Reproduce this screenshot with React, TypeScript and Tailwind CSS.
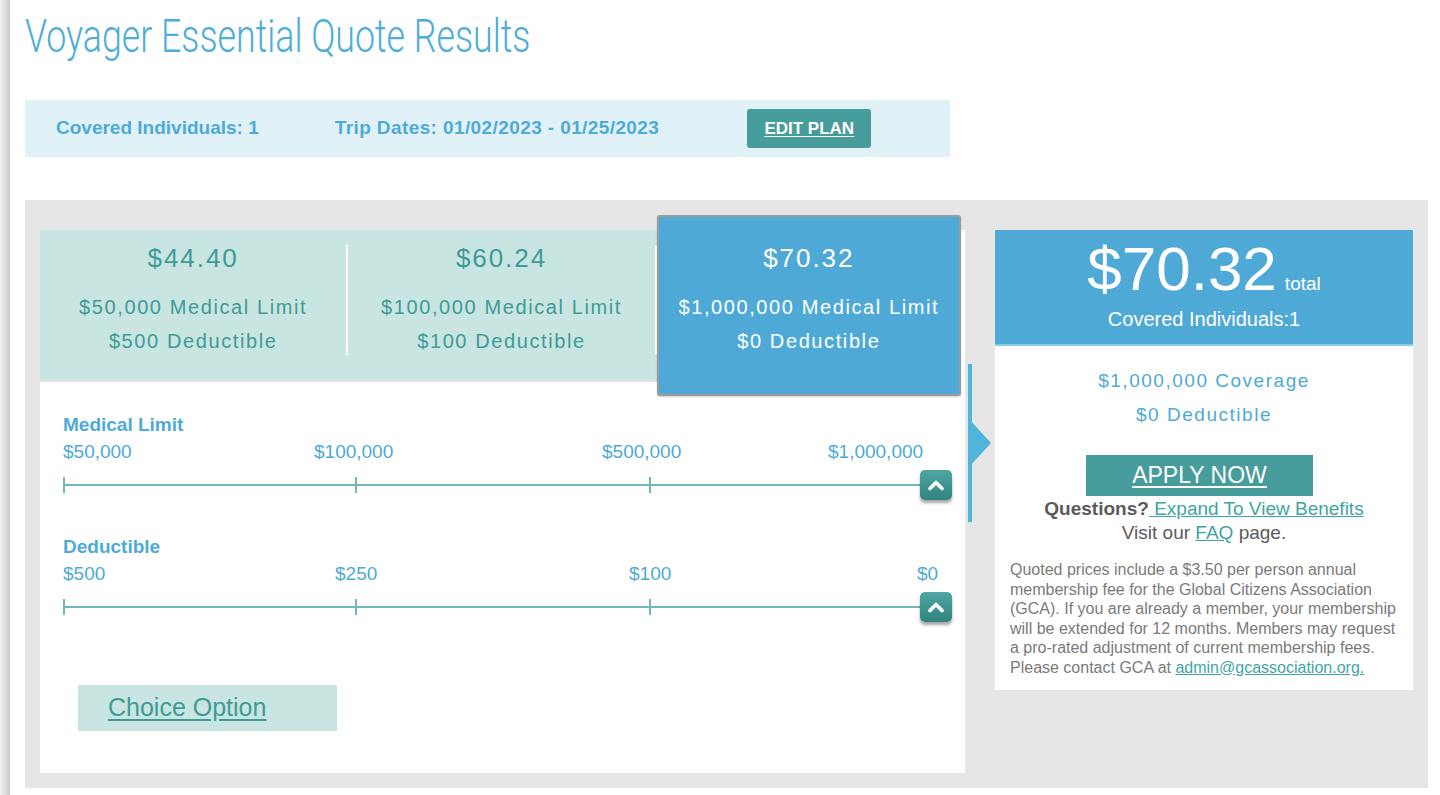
import React from "react";

const sans = "font-['Liberation_Sans',Arial,sans-serif]";

type Tick = { text: string; pos: string };

const medicalTicks: Tick[] = [
  { text: "$50,000", pos: "left-0" },
  { text: "$100,000", pos: "left-[251px]" },
  { text: "$500,000", pos: "left-[539px]" },
  { text: "$1,000,000", pos: "left-[765px]" },
];

const deductibleTicks: Tick[] = [
  { text: "$500", pos: "left-0" },
  { text: "$250", pos: "left-[272px]" },
  { text: "$100", pos: "left-[566px]" },
  { text: "$0", pos: "left-[854px]" },
];

function Handle() {
  return (
    <div className="absolute right-0 top-0 grid h-[30px] w-[32px] place-items-center rounded-[5px] bg-gradient-to-b from-[#4fa6a3] to-[#2f8480] shadow-[0_3px_3px_rgba(0,0,0,0.35)]">
      <svg width="18" height="12" viewBox="0 0 18 12" aria-hidden>
        <path d="M3 9.5 L9 3.5 L15 9.5" fill="none" stroke="#fff" strokeWidth="3.6" strokeLinecap="round" strokeLinejoin="round" />
      </svg>
    </div>
  );
}

function RangeRow({ title, ticks }: { title: string; ticks: Tick[] }) {
  return (
    <div className="pr-[13px]">
      <div className="text-[19px] font-bold leading-[24px] text-[#4eaad7]">{title}</div>
      <div className="relative mt-[3px] h-[24px] text-[19px] leading-[24px] text-[#4eaad7]">
        {ticks.map((t) => (
          <span key={t.text} className={`absolute top-0 whitespace-nowrap ${t.pos}`}>
            {t.text}
          </span>
        ))}
      </div>
      <div className="relative mt-[6px] h-[30px]">
        <div className="absolute left-0 right-[16px] top-[14px] h-[2px] bg-[#73b6b9]" />
        <div className="absolute left-0 top-[7px] h-[16px] w-[2px] bg-[#73b6b9]" />
        <div className="absolute left-[292px] top-[7px] h-[16px] w-[2px] bg-[#73b6b9]" />
        <div className="absolute left-[586px] top-[7px] h-[16px] w-[2px] bg-[#73b6b9]" />
        <Handle />
      </div>
    </div>
  );
}

function PlanTab({ price, limit, deductible }: { price: string; limit: string; deductible: string }) {
  return (
    <div className="flex w-[307px] flex-col items-center pt-[12px] text-[#3e9b97]">
      <div className="text-[26px] leading-[32px] tracking-[0.075em]">{price}</div>
      <div className="mt-[16px] text-[20px] leading-[34px] tracking-[0.08em]">{limit}</div>
      <div className="text-[20px] leading-[34px] tracking-[0.08em]">{deductible}</div>
    </div>
  );
}

export default function App() {
  return (
    <div className={`flex min-h-[795px] bg-white ${sans}`}>
      <div className="w-[10px] shrink-0 bg-gradient-to-r from-[#efefef] via-[#dedede] to-[#c9c9c9]" />
      <div className="flex-1 pl-[15px] pr-[12px]">
        <h1 className="mt-[13px] h-[46px] whitespace-nowrap">
          <span className="inline-block origin-left scale-x-[0.777] font-['Roboto',sans-serif] text-[46px] font-light leading-[46px] text-[#4eadd9]">
            Voyager Essential Quote Results
          </span>
        </h1>

        <div className="mt-[41px] flex h-[57px] w-[925px] items-center bg-[#e0f2f8] pl-[31px] text-[19px] font-bold text-[#4eaad7]">
          <span>Covered Individuals: 1</span>
          <span className="ml-[76px] tracking-[0.4px]">Trip Dates: 01/02/2023 - 01/25/2023</span>
          <button
            type="button"
            className="ml-[88px] h-[39px] w-[124px] rounded-[3px] bg-[#479c9c] text-[17px] font-bold text-white underline underline-offset-2"
          >
            EDIT PLAN
          </button>
        </div>

        <div className="mt-[43px] flex h-[588px] bg-[#e6e6e6] px-[15px] pt-[30px]">
          {/* plans and sliders */}
          <div className="h-[543px] w-[925px] bg-white">
            <div className="relative flex h-[152px] w-[921px] border-b-2 border-[#e3e3e3] bg-[#c9e5e1]">
              <PlanTab price="$44.40" limit="$50,000 Medical Limit" deductible="$500 Deductible" />
              <div className="mt-[15px] h-[110px] w-[2px] bg-white" />
              <PlanTab price="$60.24" limit="$100,000 Medical Limit" deductible="$100 Deductible" />
              <div className="mt-[15px] h-[110px] w-[2px] bg-white" />
              <div className="relative z-10 -mt-[15px] flex h-[181px] w-[305px] flex-col items-center rounded-[3px] border-2 border-[#9c9c9c] bg-[#4fa9d6] pt-[25px] text-white shadow-[0_1px_2px_rgba(0,0,0,0.2)]">
                <div className="text-[26px] leading-[32px] tracking-[0.075em]">$70.32</div>
                <div className="mt-[16px] text-[20px] leading-[34px] tracking-[0.08em]">$1,000,000 Medical Limit</div>
                <div className="text-[20px] leading-[34px] tracking-[0.08em]">$0 Deductible</div>
              </div>
            </div>

            <div className="pl-[23px] pt-[31px]">
              <RangeRow title="Medical Limit" ticks={medicalTicks} />
              <div className="mt-[35px]">
                <RangeRow title="Deductible" ticks={deductibleTicks} />
              </div>
            </div>

            <div className="ml-[38px] mt-[63px] flex h-[46px] w-[259px] items-center bg-[#c9e5e1] pl-[30px]">
              <a href="#" className="text-[25px] text-[#3e9b97] underline underline-offset-[3px]">
                Choice Option
              </a>
            </div>
          </div>

          {/* pointer */}
          <div className="w-[30px] shrink-0 pl-[3px] pt-[134px]">
            <div className="relative h-[158px] w-[4px] bg-[#4fb5dd]">
              <div className="absolute left-0 top-[54px] h-0 w-0 border-y-[25px] border-l-[23px] border-y-transparent border-l-[#4fb5dd]" />
            </div>
          </div>

          {/* summary */}
          <div className="h-[460px] w-[418px] shrink-0 bg-white">
            <div className="flex h-[116px] flex-col items-center border-b-2 border-[#8ccbe8] bg-[#4fa9d6] pt-[8px] text-white">
              <div className="flex items-baseline">
                <span className="text-[62px] leading-[62px]">$70.32</span>
                <span className="ml-[8px] text-[19px]">total</span>
              </div>
              <div className="mt-[7px] text-[20px] leading-[24px]">Covered Individuals:1</div>
            </div>

            <div className="flex flex-col items-center pt-[18px]">
              <div className="text-[19px] leading-[34px] tracking-[0.08em] text-[#4eaad7]">$1,000,000 Coverage</div>
              <div className="text-[19px] leading-[34px] tracking-[0.08em] text-[#4eaad7]">$0 Deductible</div>
              <button
                type="button"
                className="mr-[9px] mt-[23px] h-[41px] w-[227px] bg-[#479c9c] text-[23px] text-white underline underline-offset-[3px]"
              >
                APPLY NOW
              </button>
              <div className="mt-[1px] text-[19px] leading-[24px] text-[#5a5a5a]">
                <span className="font-semibold">Questions?</span>
                <a href="#" className="text-[#3fa5a3] underline">
                  {" "}Expand To View Benefits
                </a>
              </div>
              <div className="text-[19px] leading-[24px] text-[#5a5a5a]">
                Visit our{" "}
                <a href="#" className="text-[#3fa5a3] underline">
                  FAQ
                </a>{" "}
                page.
              </div>
            </div>

            <p className="mt-[15px] whitespace-nowrap px-[15px] text-[16px] leading-[19.5px] text-[#7a7a7a]">
              Quoted prices include a $3.50 per person annual
              <br />
              membership fee for the Global Citizens Association
              <br />
              (GCA). If you are already a member, your membership
              <br />
              will be extended for 12 months. Members may request
              <br />
              a pro-rated adjustment of current membership fees.
              <br />
              Please contact GCA at{" "}
              <a href="#" className="text-[#3fa5a3] underline">
                admin@gcassociation.org.
              </a>
            </p>
          </div>
        </div>
      </div>
    </div>
  );
}
